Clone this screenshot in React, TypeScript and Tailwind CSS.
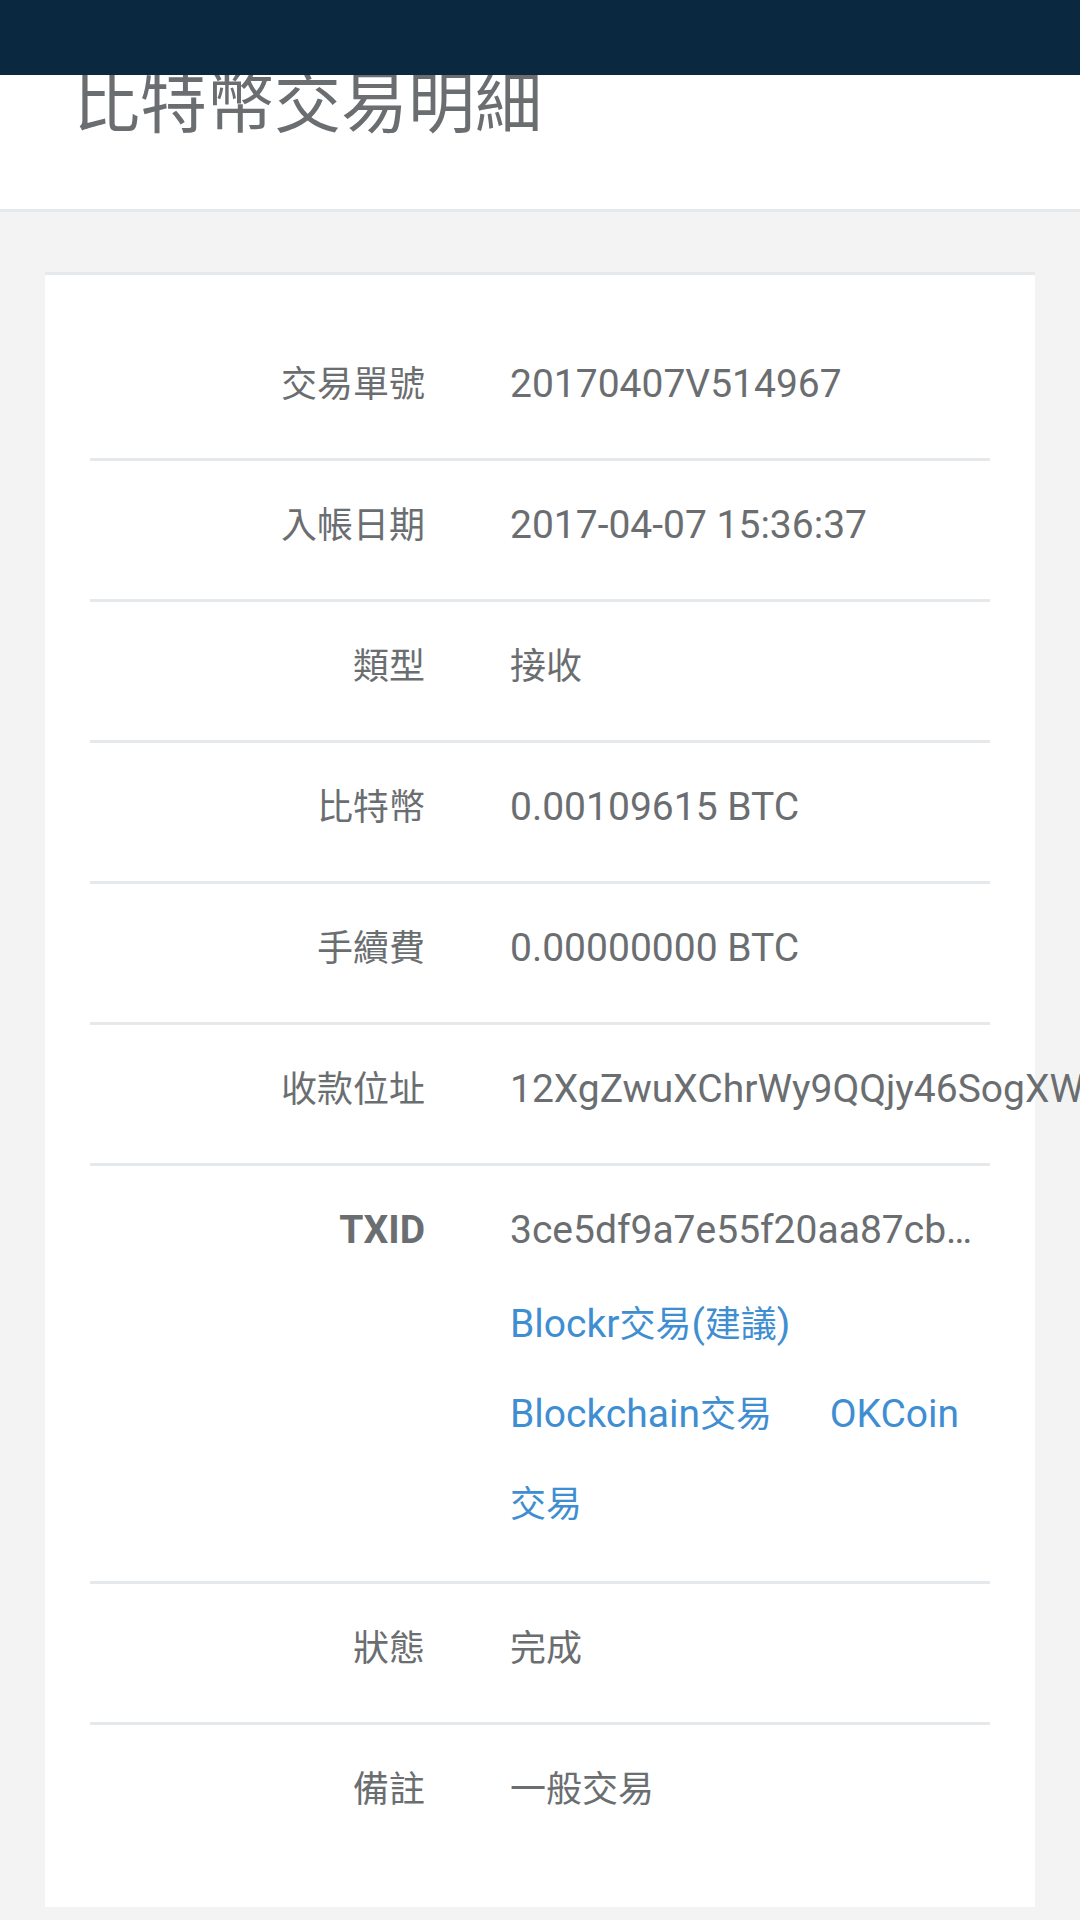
import React from 'react'

const rows: { label: string; value: string }[] = [
  { label: '交易單號', value: '20170407V514967' },
  { label: '入帳日期', value: '2017-04-07 15:36:37' },
  { label: '類型', value: '接收' },
  { label: '比特幣', value: '0.00109615 BTC' },
  { label: '手續費', value: '0.00000000 BTC' },
  { label: '收款位址', value: '12XgZwuXChrWy9QQjy46SogXW' },
]

const tail = [
  { label: '狀態', value: '完成' },
  { label: '備註', value: '一般交易' },
]

// CJK glyphs render a bit smaller than the latin ones in the original
function Mix({ text }: { text: string }) {
  const parts = text.split(/([\u3400-\u9fff]+)/)
  return (
    <>
      {parts.map((p, i) =>
        /[\u3400-\u9fff]/.test(p) ? <span key={i} className="text-[36px] leading-[30px]">{p}</span> : p
      )}
    </>
  )
}

function Row({ label, children, last }: { label: string; children: React.ReactNode; last?: boolean }) {
  return (
    <div className={`grid grid-cols-[335px_1fr] gap-x-[85px] pt-[44px] pb-[54px] ${last ? '' : 'border-b-[3px] border-[#e6e9ec]'}`}>
      <div className="text-right leading-[40px]"><Mix text={label} /></div>
      <div className="leading-[40px] whitespace-nowrap">{children}</div>
    </div>
  )
}

export default function App() {
  return (
    <div className="min-h-[1920px] bg-[#f3f3f3] overflow-x-hidden text-[#6b6e71]" style={{ fontFamily: 'Roboto, "Noto Sans CJK TC", sans-serif' }}>
      <div className="fixed top-0 left-0 right-0 h-[75px] bg-[#0a2940] z-10" />

      <header className="h-[212px] bg-white border-b-[3px] border-[#e6e9ec] pt-[71px] pl-[73px]">
        <h1 className="text-[67px] leading-[67px]">比特幣交易明細</h1>
      </header>

      <div className="mx-[45px] mt-[60px] bg-white border-t-[3px] border-[#e6e9ec] px-[45px] pt-[45px] pb-[44px] text-[39px]">
        {rows.map(r => (
          <Row key={r.label} label={r.label}><Mix text={r.value} /></Row>
        ))}

        <div className="grid grid-cols-[335px_1fr] gap-x-[85px] pt-[44px] pb-[32px] border-b-[3px] border-[#e6e9ec]">
          <div className="text-right leading-[40px] font-bold">TXID</div>
          <div className="pr-[14px] min-w-0">
            <div className="leading-[40px] truncate">3ce5df9a7e55f20aa87cb4d0e1f93a6c2b8d7e5f4a1c9b0d3e6f8a2c5b7d9e1f</div>
            <div className="mt-[29px] leading-[90px] text-[#3f8ed2]">
              <a href="#" className="mr-[48px]"><Mix text="Blockr交易(建議)" /></a>{' '}
              <a href="#" className="mr-[48px]"><Mix text="Blockchain交易" /></a>{' '}
              <a href="#"><Mix text="OKCoin交易" /></a>
            </div>
          </div>
        </div>

        {tail.map((r, i) => (
          <Row key={r.label} label={r.label} last={i === tail.length - 1}><Mix text={r.value} /></Row>
        ))}
      </div>
    </div>
  )
}
